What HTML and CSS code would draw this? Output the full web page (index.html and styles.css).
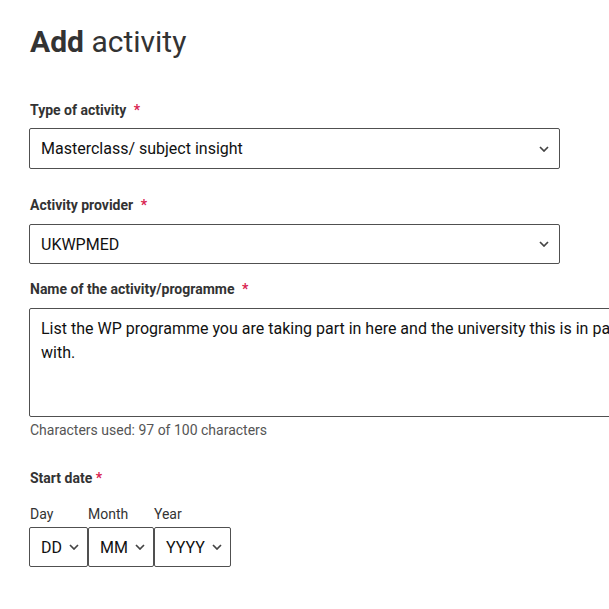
FILE: index.html
```html
<!DOCTYPE html>
<html lang="en">
<head>
<meta charset="utf-8">
<title>Add activity</title>
<link rel="stylesheet" href="styles.css">
</head>
<body>
<main class="page">
  <h1 class="title"><strong>Add</strong> activity</h1>

  <div class="field field-type">
    <label class="label">Type of activity <span class="req req-gap">*</span></label>
    <div class="select select-wide">
      <span class="select-text">Masterclass/ subject insight</span>
      <svg class="chev" width="10" height="6" viewBox="0 0 10 6"><path d="M1 1l4 4 4-4" fill="none" stroke="#444" stroke-width="1.7"/></svg>
    </div>
  </div>

  <div class="field field-provider">
    <label class="label">Activity provider <span class="req req-gap">*</span></label>
    <div class="select select-wide select-40">
      <span class="select-text">UKWPMED</span>
      <svg class="chev" width="10" height="6" viewBox="0 0 10 6"><path d="M1 1l4 4 4-4" fill="none" stroke="#444" stroke-width="1.7"/></svg>
    </div>
  </div>

  <div class="field field-name">
    <label class="label">Name of the activity/programme <span class="req req-gap">*</span></label>
    <textarea class="textarea" rows="3">List the WP programme you are taking part in here and the university this is in partnership with.</textarea>
    <p class="hint">Characters used: 97 of 100 characters</p>
  </div>

  <div class="field field-date" role="group">
    <div class="label">Start date <span class="req">*</span></div>
    <div class="date-row">
      <div class="date-part">
        <span class="date-label">Day</span>
        <div class="select date-select">
          <span class="select-text">DD</span>
          <svg class="chev" width="10" height="6" viewBox="0 0 10 6"><path d="M1 1l4 4 4-4" fill="none" stroke="#444" stroke-width="1.7"/></svg>
        </div>
      </div>
      <div class="date-part">
        <span class="date-label date-label-tight">Month</span>
        <div class="select date-select">
          <span class="select-text">MM</span>
          <svg class="chev" width="10" height="6" viewBox="0 0 10 6"><path d="M1 1l4 4 4-4" fill="none" stroke="#444" stroke-width="1.7"/></svg>
        </div>
      </div>
      <div class="date-part">
        <span class="date-label date-label-tight">Year</span>
        <div class="select date-select">
          <span class="select-text">YYYY</span>
          <svg class="chev" width="10" height="6" viewBox="0 0 10 6"><path d="M1 1l4 4 4-4" fill="none" stroke="#444" stroke-width="1.7"/></svg>
        </div>
      </div>
    </div>
  </div>
</main>
</body>
</html>
```

FILE: styles.css
```css
html, body {
  margin: 0;
  padding: 0;
  background: #ffffff;
  overflow: hidden;
}

body {
  font-family: Roboto, "Liberation Sans", Arial, sans-serif;
  color: #333333;
}

.page {
  padding: 24px 0 0 29px;
}

.title {
  margin: 0;
  font-size: 30px;
  line-height: 36px;
  font-weight: 400;
  color: #333333;
  padding-left: 1px;
}

.title strong {
  font-weight: 700;
}

.field {
  margin: 0;
  padding: 0;
}

.field-type {
  margin-top: 40px;
}

.field-provider {
  margin-top: 26px;
}

.field-name {
  margin-top: 15px;
}

.field-date {
  margin-top: 28px;
}

.label {
  display: block;
  padding: 0 0 0 1px;
  font-size: 14px;
  line-height: 20px;
  font-weight: 700;
  color: #333333;
}

.req {
  color: #d9224f;
}

.req-gap {
  margin-left: 4px;
}

.select {
  box-sizing: border-box;
  display: flex;
  align-items: center;
  border: 1px solid #505050;
  border-radius: 2px;
  background: #ffffff;
  color: #111111;
  font-size: 16px;
}

.select-wide {
  width: 531px;
  height: 41px;
  margin-top: 8px;
  padding: 0 10px 0 11px;
  justify-content: space-between;
}

.select-40 {
  height: 40px;
  margin-top: 9px;
}

.chev {
  display: block;
  flex: none;
}

.textarea {
  display: block;
  box-sizing: border-box;
  width: 690px;
  height: 109px;
  margin: 9px 0 0 0;
  padding: 8px 12px 8px 11px;
  border: 1px solid #505050;
  border-radius: 2px;
  font-family: Roboto, "Liberation Sans", Arial, sans-serif;
  font-size: 16px;
  line-height: 24px;
  color: #111111;
  resize: none;
  overflow: hidden;
}

.hint {
  margin: 3px 0 0 0;
  padding-left: 1px;
  font-size: 14px;
  line-height: 20px;
  color: #555555;
}

.date-row {
  display: flex;
  margin-top: 16px;
}

.date-part {
  display: flex;
  flex-direction: column;
}

.date-label {
  padding-left: 1px;
  font-size: 14px;
  line-height: 20px;
  color: #333333;
}

.date-label-tight {
  padding-left: 0;
}

.date-select {
  height: 40px;
  margin-top: 3px;
  padding: 0 8px 0 11px;
  gap: 7px;
}
```
